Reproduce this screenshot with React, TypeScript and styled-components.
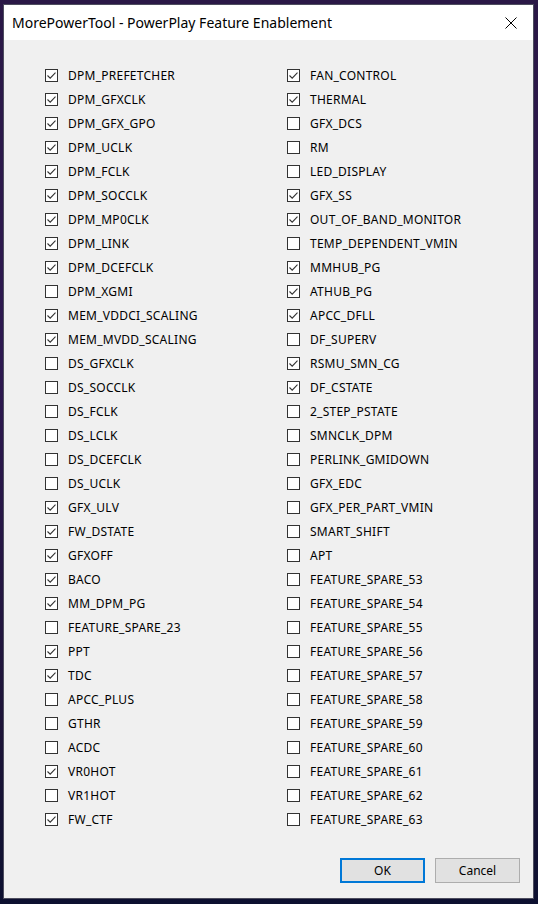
import React from "react";
import styled, { createGlobalStyle } from "styled-components";

const Global = createGlobalStyle`
  html, body { margin: 0; padding: 0; }
  body {
    width: 538px;
    height: 904px;
    overflow: hidden;
    background: linear-gradient(180deg, #2a1846 0%, #2d1850 40%, #1d1438 80%, #0d1030 100%);
  }
`;

const Screen = styled.div`
  width: 538px;
  height: 904px;
  padding: 4px 0 0 3px;
  box-sizing: border-box;
`;

const Window = styled.div`
  width: 531px;
  height: 895px;
  background: #f0f0f0;
  box-sizing: border-box;
  border: 1px solid #4d4d5e;
  display: flex;
  flex-direction: column;
  font-family: "Noto Sans", "Open Sans", sans-serif;
`;

const TitleBar = styled.div`
  height: 35px;
  background: #ffffff;
  display: flex;
  align-items: center;
  justify-content: space-between;
  padding: 0 14px 0 8px;
  flex-shrink: 0;
`;

const Title = styled.div`
  font-size: 14px;
  color: #000;
`;

const CloseIcon = styled.svg`
  width: 12px;
  height: 12px;
  margin-right: 2px;
`;

const Body = styled.div`
  flex: 1;
  display: grid;
  grid-template-columns: 242px 242px;
  grid-auto-flow: column;
  grid-template-rows: repeat(32, 24px);
  padding: 23px 0 0 41px;
  align-content: start;
`;

const Row = styled.label`
  display: flex;
  align-items: center;
  gap: 10px;
  height: 24px;
`;

const Box = styled.span`
  width: 11px;
  height: 11px;
  border: 1px solid #333333;
  background: #ffffff;
  display: flex;
  align-items: center;
  justify-content: center;
  flex-shrink: 0;
`;

const Label = styled.span`
  font-size: 12px;
  color: #000;
  letter-spacing: 0.25px;
  white-space: nowrap;
`;

const Footer = styled.div`
  display: flex;
  justify-content: flex-end;
  gap: 10px;
  padding: 0 13px 15px 0;
`;

const Button = styled.div<{ $primary?: boolean }>`
  width: 85px;
  height: 25px;
  box-sizing: border-box;
  background: #e1e1e1;
  border: ${(p) => (p.$primary ? "2px solid #0078d7" : "1px solid #adadad")};
  display: flex;
  align-items: center;
  justify-content: center;
  font-size: 12px;
  color: #000;
`;

const left: [string, boolean][] = [
  ["DPM_PREFETCHER", true],
  ["DPM_GFXCLK", true],
  ["DPM_GFX_GPO", true],
  ["DPM_UCLK", true],
  ["DPM_FCLK", true],
  ["DPM_SOCCLK", true],
  ["DPM_MP0CLK", true],
  ["DPM_LINK", true],
  ["DPM_DCEFCLK", true],
  ["DPM_XGMI", false],
  ["MEM_VDDCI_SCALING", true],
  ["MEM_MVDD_SCALING", true],
  ["DS_GFXCLK", false],
  ["DS_SOCCLK", false],
  ["DS_FCLK", false],
  ["DS_LCLK", false],
  ["DS_DCEFCLK", false],
  ["DS_UCLK", false],
  ["GFX_ULV", true],
  ["FW_DSTATE", true],
  ["GFXOFF", true],
  ["BACO", true],
  ["MM_DPM_PG", true],
  ["FEATURE_SPARE_23", false],
  ["PPT", true],
  ["TDC", true],
  ["APCC_PLUS", false],
  ["GTHR", false],
  ["ACDC", false],
  ["VR0HOT", true],
  ["VR1HOT", false],
  ["FW_CTF", true],
];

const right: [string, boolean][] = [
  ["FAN_CONTROL", true],
  ["THERMAL", true],
  ["GFX_DCS", false],
  ["RM", false],
  ["LED_DISPLAY", false],
  ["GFX_SS", true],
  ["OUT_OF_BAND_MONITOR", true],
  ["TEMP_DEPENDENT_VMIN", false],
  ["MMHUB_PG", true],
  ["ATHUB_PG", true],
  ["APCC_DFLL", true],
  ["DF_SUPERV", false],
  ["RSMU_SMN_CG", true],
  ["DF_CSTATE", true],
  ["2_STEP_PSTATE", false],
  ["SMNCLK_DPM", false],
  ["PERLINK_GMIDOWN", false],
  ["GFX_EDC", false],
  ["GFX_PER_PART_VMIN", false],
  ["SMART_SHIFT", false],
  ["APT", false],
  ...Array.from({ length: 11 }, (_, i) => [`FEATURE_SPARE_${53 + i}`, false] as [string, boolean]),
];

const Check = () => (
  <svg width="11" height="11" viewBox="0 0 11 11">
    <path d="M1.5 5.5 L4.2 8.2 L9.5 2.6" fill="none" stroke="#333" strokeWidth="1.1" />
  </svg>
);

const Item = ({ name, on }: { name: string; on: boolean }) => (
  <Row>
    <Box>{on && <Check />}</Box>
    <Label>{name}</Label>
  </Row>
);

export default function App() {
  return (
    <Screen>
      <Global />
      <Window>
        <TitleBar>
          <Title>MorePowerTool - PowerPlay Feature Enablement</Title>
          <CloseIcon viewBox="0 0 12 12">
            <path d="M0.5 0.5 L11.5 11.5 M11.5 0.5 L0.5 11.5" stroke="#000" strokeWidth="1" />
          </CloseIcon>
        </TitleBar>
        <Body>
          {[...left, ...right].map(([n, c]) => (
            <Item key={n} name={n} on={c} />
          ))}
        </Body>
        <Footer>
          <Button $primary>OK</Button>
          <Button>Cancel</Button>
        </Footer>
      </Window>
    </Screen>
  );
}
